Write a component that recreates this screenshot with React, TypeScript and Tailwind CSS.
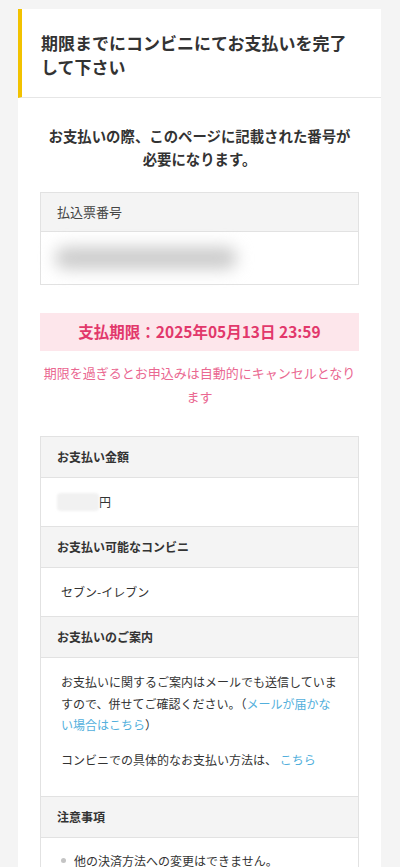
import React from 'react'

const font = { fontFamily: '"Noto Sans CJK JP", "Noto Sans", sans-serif' }

function HeadCell({ children }: { children: React.ReactNode }) {
    return (
        <div className="h-[41px] flex items-center px-4 bg-[#f4f4f4] border-b border-[#e2e2e2] text-[12px] font-bold text-[#333]">
            {children}
        </div>
    )
}

export default function App() {
    return (
        <div className="min-h-[867px] bg-[#f4f4f4] pt-[9px]" style={font}>
            <div className="ml-[18px] w-[363px] bg-white">
                {/* Header */}
                <div className="border-l-[4px] border-[#f2c200] border-b border-b-[#e6e6e6] pl-[19px] pr-[22px] pt-[22px] pb-[18px]">
                    <h1 className="text-[17px] leading-[24px] font-bold text-[#333]">
                        期限までにコンビニにてお支払いを完了して下さい
                    </h1>
                </div>

                <div className="px-[22px] pb-10">
                    <p className="pt-[26px] text-center text-[14.4px] leading-[23px] font-bold text-[#333]">
                        お支払いの際、このページに記載された番号が
                        <br />
                        必要になります。
                    </p>

                    {/* Slip number */}
                    <div className="mt-[22px] border border-[#e2e2e2]">
                        <div className="h-[39px] flex items-center px-4 bg-[#f4f4f4] border-b border-[#e2e2e2] text-[13px] text-[#444]">
                            払込票番号
                        </div>
                        <div className="h-[52px] flex items-center pl-[14px]">
                            <div className="w-[182px] h-[22px] rounded-full bg-[#cbcbcb] blur-[8px]" />
                        </div>
                    </div>

                    {/* Deadline */}
                    <div className="mt-7 h-[38px] flex items-center justify-center bg-[#fde6eb] text-[15.5px] font-bold text-[#e2386b]">
                        支払期限：2025年05月13日 23:59
                    </div>
                    <p className="mt-[10px] text-center text-[13px] leading-[24px] text-[#ea6891]">
                        期限を過ぎるとお申込みは自動的にキャンセルとなります
                    </p>

                    {/* Details */}
                    <div className="mt-[27px] border border-[#e2e2e2] border-b-0">
                        <HeadCell>お支払い金額</HeadCell>
                        <div className="h-[49px] flex items-center px-4 border-b border-[#e2e2e2] text-[12px] text-[#333]">
                            <span className="inline-block w-[42px] h-[18px] bg-[#f1f1f1] rounded-sm blur-[1px]" />
                            <span>円</span>
                        </div>

                        <HeadCell>お支払い可能なコンビニ</HeadCell>
                        <div className="h-[49px] flex items-center px-5 border-b border-[#e2e2e2] text-[12px] text-[#333]">
                            セブン-イレブン
                        </div>

                        <HeadCell>お支払いのご案内</HeadCell>
                        <div className="px-5 pt-[13px] pb-3 border-b border-[#e2e2e2] text-[12px] leading-[21.5px] text-[#333]">
                            <p className="mb-[13px]">
                                お支払いに関するご案内はメールでも送信していますので、併せてご確認ください。（<a className="text-[#52afdc]">メールが届かない場合はこちら</a>）
                            </p>
                            <p className="mb-[14px]">
                                コンビニでの具体的なお支払い方法は、 <a className="text-[#52afdc]">こちら</a>
                            </p>
                        </div>

                        <HeadCell>注意事項</HeadCell>
                        <ul className="px-5 pt-[12px] pb-4 border-b border-[#e2e2e2] text-[12px] leading-[21px] text-[#333] space-y-1">
                            <li className="flex items-start gap-[8px]">
                                <span className="mt-[8px] w-[5px] h-[5px] rounded-full bg-[#c4c4c4] shrink-0" />
                                <span>他の決済方法への変更はできません。</span>
                            </li>
                            <li className="flex items-start gap-[8px]">
                                <span className="mt-[8px] w-[5px] h-[5px] rounded-full bg-[#c4c4c4] shrink-0" />
                                <span>お支払い後の取り消しはできません。</span>
                            </li>
                        </ul>
                    </div>
                </div>
            </div>
        </div>
    )
}
